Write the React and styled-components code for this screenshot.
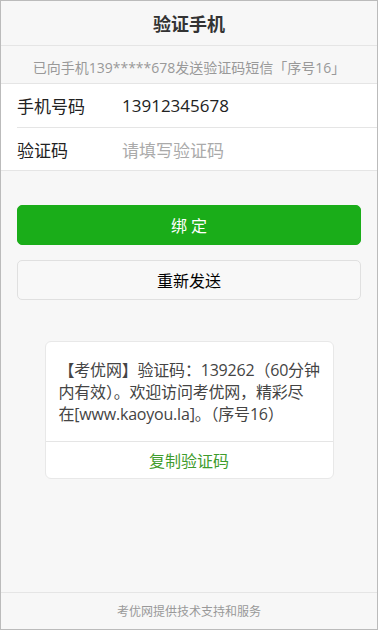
import React from 'react';
import styled, { createGlobalStyle } from 'styled-components';

// --- GLOBAL ---
const GlobalStyle = createGlobalStyle`
  html, body { margin: 0; padding: 0; }
  body {
    font-family: 'Open Sans', 'Noto Sans CJK SC', sans-serif;
    background: #f7f7f7;
    color: #333;
  }
  * { box-sizing: border-box; }
`;

// --- STYLED COMPONENTS ---
const Page = styled.div`
  height: 100vh;
  border: 1px solid #bbb;
  background: #f7f7f7;
  display: flex;
  flex-direction: column;
  overflow: hidden;
`;

const Header = styled.header`
  height: 45px;
  border-bottom: 1px solid #e5e5e5;
  display: flex;
  align-items: center;
  justify-content: center;
  font-size: 18px;
  font-weight: 700;
  color: #333;
`;

const Notice = styled.p`
  margin: 0;
  padding: 14px 0 7px;
  line-height: 16px;
  font-size: 14px;
  color: #999;
  text-align: center;
  white-space: nowrap;
  border-bottom: 1px solid #e5e5e5;
`;

const Form = styled.div`
  background: #fff;
  padding-left: 16px;
  border-bottom: 1px solid #e5e5e5;
`;

const Row = styled.div`
  height: 43px;
  display: flex;
  align-items: center;
  font-size: 17px;
  & + & {
    border-top: 1px solid #e5e5e5;
  }
`;

const Label = styled.span`
  width: 105px;
  color: #222;
`;

const Value = styled.span`
  color: ${p => (p.$placeholder ? '#aaa' : '#222')};
`;

const Actions = styled.div`
  padding: 34px 16px 0;
  display: flex;
  flex-direction: column;
  gap: 15px;
`;

const Button = styled.button`
  height: 40px;
  border-radius: 5px;
  font-family: inherit;
  font-size: 16px;
  cursor: pointer;
  border: 1px solid ${p => (p.$primary ? '#1aad19' : '#e0e0e0')};
  background: ${p => (p.$primary ? '#1aad19' : '#f8f8f8')};
  color: ${p => (p.$primary ? '#fff' : '#000')};
  letter-spacing: ${p => (p.$primary ? '4px' : '0')};
  text-indent: ${p => (p.$primary ? '4px' : '0')};
`;

const Card = styled.div`
  width: 289px;
  margin: 41px auto 0;
  background: #fff;
  border: 1px solid #e8e8e8;
  border-radius: 6px;
  overflow: hidden;
`;

const Message = styled.p`
  margin: 0;
  padding: 17px 13px 16px;
  font-size: 16px;
  line-height: 22px;
  color: #444;
  white-space: nowrap;
  letter-spacing: -0.2px;
`;

const CopyLink = styled.div`
  height: 37px;
  border-top: 1px solid #e5e5e5;
  display: flex;
  align-items: center;
  justify-content: center;
  font-size: 16px;
  color: #3f9c2d;
  cursor: pointer;
`;

const Footer = styled.footer`
  margin-top: auto;
  height: 37px;
  border-top: 1px solid #e5e5e5;
  display: flex;
  align-items: center;
  justify-content: center;
  font-size: 12px;
  color: #999;
`;

const App = () => {
  return (
    <>
      <GlobalStyle />
      <Page>
        <Header>验证手机</Header>
        <Notice>已向手机139*****678发送验证码短信「序号16」</Notice>

        <Form>
          <Row>
            <Label>手机号码</Label>
            <Value>13912345678</Value>
          </Row>
          <Row>
            <Label>验证码</Label>
            <Value $placeholder>请填写验证码</Value>
          </Row>
        </Form>

        <Actions>
          <Button $primary>绑定</Button>
          <Button>重新发送</Button>
        </Actions>

        <Card>
          <Message>
            【考优网】验证码：139262（60分钟<br />
            内有效）。欢迎访问考优网，精彩尽<br />
            在[www.kaoyou.la]。（序号16）
          </Message>
          <CopyLink>复制验证码</CopyLink>
        </Card>

        <Footer>考优网提供技术支持和服务</Footer>
      </Page>
    </>
  );
};

export default App;
